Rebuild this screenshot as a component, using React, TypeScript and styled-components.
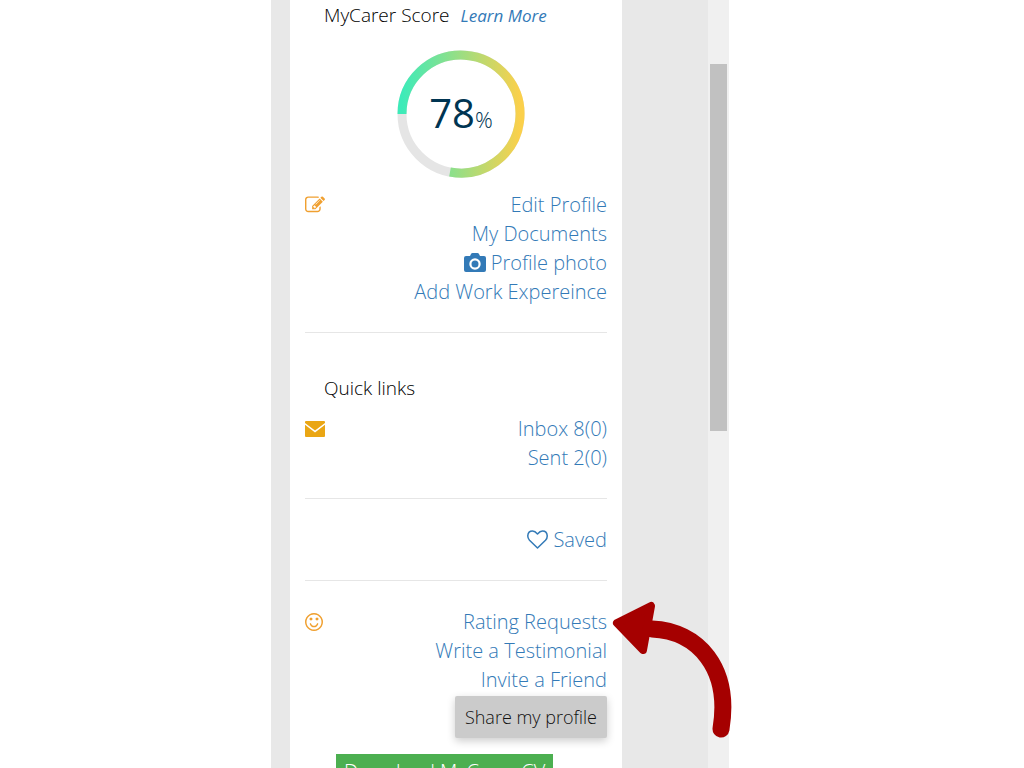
import React from "react";
import styled, { createGlobalStyle } from "styled-components";

const GlobalStyle = createGlobalStyle`
  * { box-sizing: border-box; }
  body { margin: 0; background: #fff; font-family: "Open Sans", sans-serif; font-weight: 300; }
`;

const Stage = styled.div`
  display: grid;
  grid-template-columns: 271fr 458fr 295fr;
  height: 100vh;
  overflow: hidden;
`;

const Viewport = styled.div`
  grid-column: 2;
  position: relative;
  display: flex;
  min-width: 0;
  min-height: 0;
  padding-left: 19px;
  background: #e8e8e8;
`;

const Card = styled.main`
  flex: 1;
  min-width: 0;
  padding: 0 15px;
  background: #fff;
`;

const Track = styled.div`
  width: 21px;
  margin-left: 86px;
  padding: 64px 2px 0;
  background: #f0f0f0;
`;

const Thumb = styled.div`
  height: 367px;
  background: #c1c1c1;
`;

const Heading = styled.h2<{ $spaced?: boolean }>`
  display: flex;
  align-items: baseline;
  gap: 11px;
  margin: 0;
  padding: ${(p) => (p.$spaced ? "15px 0 12px 19px" : "1px 0 0 19px")};
  font-size: 19px;
  line-height: 28px;
  font-weight: 300;
  color: #000;
`;

const LearnMore = styled.a`
  font-size: 17px;
  font-style: italic;
  font-weight: 400;
  color: #337ab7;
  text-decoration: none;
`;

const Score = styled.div`
  display: grid;
  place-items: center;
  padding: 20px 0 12px 10px;

  > * { grid-area: 1 / 1; }
`;

const ScoreText = styled.div`
  padding-top: 4px;
  font-size: 40px;
  line-height: 56px;
  font-weight: 400;
  color: #003552;

  small { font-size: 22px; font-weight: 300; }
`;

const Section = styled.section`
  display: flex;
  justify-content: space-between;
  align-items: flex-start;
`;

const Marker = styled.span`
  display: flex;
  align-items: center;
  height: 29px;
  color: #f0a030;
`;

const Links = styled.ul`
  display: flex;
  flex-direction: column;
  align-items: flex-end;
  margin: 0 0 0 auto;
  padding: 0;
  list-style: none;
`;

const Link = styled.a`
  display: flex;
  align-items: center;
  gap: 5px;
  font-size: 20px;
  line-height: 29px;
  color: #337ab7;
  text-decoration: none;
  white-space: nowrap;
`;

const Divider = styled.hr`
  margin: 26px 0;
  border: 0;
  border-top: 1px solid #e6e6e6;
`;

const ShareButton = styled.button`
  display: block;
  margin: 2px 0 16px auto;
  padding: 0 10px;
  border: 0;
  border-radius: 2px;
  background: #cbcbcb;
  box-shadow: 0 3px 8px rgba(0, 0, 0, 0.2);
  font: 300 18px/42px "Open Sans", sans-serif;
  color: #111;
`;

const DownloadButton = styled.button`
  display: block;
  margin-left: 31px;
  padding: 0 8px;
  border: 0;
  background: #4caf50;
  font: 300 20px/36px "Open Sans", sans-serif;
  color: #fff;
`;

const Arrow = styled.svg`
  position: absolute;
  top: 600px;
  right: -3px;
  width: 120px;
  height: 139px;
`;

const EditIcon = () => (
  <svg width="20" height="20" viewBox="0 0 1792 1792" fill="currentColor" aria-hidden="true">
    <path d="M888 1184l116-116-152-152-116 116v56h96v96h56zm440-720q-16-16-33 1l-350 350q-17 17-1 33t33-1l350-350q17-17 1-33zm80 594v190q0 119-84.5 203.5t-203.5 84.5h-832q-119 0-203.5-84.5t-84.5-203.5v-832q0-119 84.5-203.5t203.5-84.5h832q63 0 117 25 15 7 18 23 3 17-9 29l-49 49q-14 14-32 8-23-6-45-6h-832q-66 0-113 47t-47 113v832q0 66 47 113t113 47h832q66 0 113-47t47-113v-126q0-13 9-22l64-64q15-15 35-7t20 29zm-96-738l288 288-672 672h-288v-288zm444 132l-92 92-288-288 92-92q28-28 68-28t68 28l152 152q28 28 28 68t-28 68z" />
  </svg>
);

const SmileIcon = () => (
  <svg width="18" height="18" viewBox="128 128 1536 1536" fill="currentColor" aria-hidden="true">
    <path d="M1262 1075q-37 121-138 195t-228 74-228-74-138-195q-8-25 4-48.5t38-31.5q25-8 48.5 4t31.5 38q25 80 92.5 129.5t151.5 49.5 151.5-49.5 92.5-129.5q8-26 32-38t49-4 37 31.5 4 48.5zm-494-435q0 53-37.5 90.5t-90.5 37.5-90.5-37.5-37.5-90.5 37.5-90.5 90.5-37.5 90.5 37.5 37.5 90.5zm512 0q0 53-37.5 90.5t-90.5 37.5-90.5-37.5-37.5-90.5 37.5-90.5 90.5-37.5 90.5 37.5 37.5 90.5zm256 256q0-130-51-248.5t-136.5-204-204-136.5-248.5-51-248.5 51-204 136.5-136.5 204-51 248.5 51 248.5 136.5 204 204 136.5 248.5 51 248.5-51 204-136.5 136.5-204 51-248.5zm128 0q0 209-103 385.5t-279.5 279.5-385.5 103-385.5-103-279.5-279.5-103-385.5 103-385.5 279.5-279.5 385.5-103 385.5 103 279.5 279.5 103 385.5z" />
  </svg>
);

const MailIcon = () => (
  <svg width="20" height="16" viewBox="0 0 20 16" fill="#eaa614" aria-hidden="true">
    <path d="M1 0H19Q20 0 20 1V2L10 9.500L0 2V1Q0 0 1 0ZM0 3.800L10 11.500L20 3.800V15Q20 16 19 16H1Q0 16 0 15Z" />
  </svg>
);

const CameraIcon = () => (
  <svg width="22" height="20" viewBox="0 0 22 20" fill="currentColor" aria-hidden="true">
    <path
      fillRule="evenodd"
      d="M7 1Q7.500 0 8.500 0H13.500Q14.500 0 15 1L16 3H20Q22 3 22 5V17Q22 19 20 19H2Q0 19 0 17V5Q0 3 2 3H6ZM11 5.300A5.700 5.700 0 1 0 11 16.700A5.700 5.700 0 1 0 11 5.300ZM11 7.500A3.500 3.500 0 1 1 11 14.500A3.500 3.500 0 1 1 11 7.500Z"
    />
  </svg>
);

const HeartIcon = () => (
  <svg width="21" height="19" viewBox="0 0 21 19" fill="none" stroke="currentColor" strokeWidth="1.5" strokeLinejoin="round" aria-hidden="true">
    <path d="M10.500 18L2.500 10.200C.8 8.400.7 6.800.8 5.600C1 2.700 3 1 5.500 1C8 1 9.500 2.800 10.500 4C11.500 2.800 13 1 15.500 1C18 1 20 2.700 20.200 5.600C20.300 6.800 20.200 8.400 18.500 10.200Z" />
  </svg>
);

const Ring = () => (
  <svg width="128" height="128" viewBox="0 0 128 128" fill="none" strokeWidth="9" aria-hidden="true">
    <defs>
      <linearGradient id="score" x1="0" x2="1" y1="0" y2="0">
        <stop offset="0" stopColor="#3debb9" />
        <stop offset="1" stopColor="#fbd04b" />
      </linearGradient>
    </defs>
    <circle cx="64" cy="64" r="59" stroke="#e5e5e5" />
    <path d="M5 64A59 59 0 1 1 53 122" stroke="url(#score)" />
  </svg>
);

export default function App() {
  return (
    <>
      <GlobalStyle />
      <Stage>
        <Viewport>
          <Card>
            <Heading>
              MyCarer Score <LearnMore href="#learn">Learn More</LearnMore>
            </Heading>
            <Score>
              <Ring />
              <ScoreText>78<small>%</small></ScoreText>
            </Score>
            <Section>
              <Marker><EditIcon /></Marker>
              <Links>
                <li><Link href="#edit">Edit Profile</Link></li>
                <li><Link href="#documents">My Documents</Link></li>
                <li><Link href="#photo"><CameraIcon />Profile photo</Link></li>
                <li><Link href="#experience">Add Work Expereince</Link></li>
              </Links>
            </Section>
            <Divider />
            <Heading $spaced>Quick links</Heading>
            <Section>
              <Marker><MailIcon /></Marker>
              <Links>
                <li><Link href="#inbox">Inbox 8(0)</Link></li>
                <li><Link href="#sent">Sent 2(0)</Link></li>
              </Links>
            </Section>
            <Divider />
            <Section>
              <Links>
                <li><Link href="#saved"><HeartIcon />Saved</Link></li>
              </Links>
            </Section>
            <Divider />
            <Section>
              <Marker><SmileIcon /></Marker>
              <Links>
                <li><Link href="#ratings">Rating Requests</Link></li>
                <li><Link href="#testimonial">Write a Testimonial</Link></li>
                <li><Link href="#invite">Invite a Friend</Link></li>
              </Links>
            </Section>
            <ShareButton type="button">Share my profile</ShareButton>
            <DownloadButton type="button">Download MyCarer CV</DownloadButton>
          </Card>
          <Track><Thumb /></Track>
          <Arrow viewBox="0 0 120 139" aria-hidden="true">
            <path d="M40 29C86 31 119 68 109 129" fill="none" stroke="#a50000" strokeWidth="17" strokeLinecap="round" />
            <path d="M5 23L39 6L31 50Z" fill="#a50000" stroke="#a50000" strokeWidth="8" strokeLinejoin="round" />
          </Arrow>
        </Viewport>
      </Stage>
    </>
  );
}
